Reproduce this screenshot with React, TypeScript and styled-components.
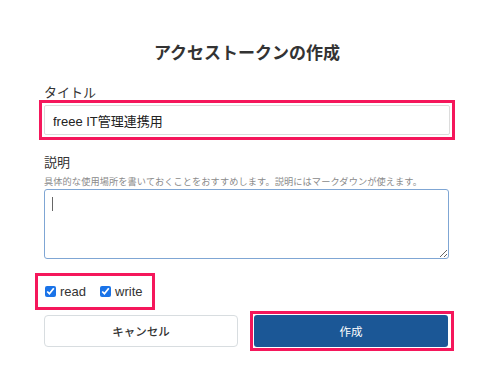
import { useState } from "react";
import styled, { createGlobalStyle } from "styled-components";

const highlight = "#f5175b";
const textColor = "#333333";
const mutedText = "#8a8a8a";
const primaryBlue = "#1b5796";

const GlobalStyle = createGlobalStyle`
  html, body {
    margin: 0;
    padding: 0;
    background: #ffffff;
  }
  body {
    font-family: "Liberation Sans", "Noto Sans CJK JP", sans-serif;
    color: ${textColor};
  }
  * {
    box-sizing: border-box;
  }
`;

const App = () => {
  const [title, setTitle] = useState("freee IT管理連携用");
  const [description, setDescription] = useState("");
  const [read, setRead] = useState(true);
  const [write, setWrite] = useState(true);

  return (
    <>
      <GlobalStyle />
      <Page>
        <Heading>アクセストークンの作成</Heading>

        <Label>タイトル</Label>
        <Highlight>
          <TextInput value={title} onChange={(e) => setTitle(e.target.value)} />
        </Highlight>

        <Label $gap={16}>説明</Label>
        <Help>
          具体的な使用場所を書いておくことをおすすめします。説明にはマークダウンが使えます。
        </Help>
        <AreaWrapper>
          <TextArea
            value={description}
            onChange={(e) => setDescription(e.target.value)}
          />
          {description === "" && <Caret />}
        </AreaWrapper>

        <ScopeBox>
          <Scope>
            <Check
              type="checkbox"
              checked={read}
              onChange={() => setRead(!read)}
            />
            read
          </Scope>
          <Scope>
            <Check
              type="checkbox"
              checked={write}
              onChange={() => setWrite(!write)}
            />
            write
          </Scope>
        </ScopeBox>

        <Actions>
          <CancelButton>キャンセル</CancelButton>
          <SubmitHighlight>
            <SubmitButton>作成</SubmitButton>
          </SubmitHighlight>
        </Actions>
      </Page>
    </>
  );
};
export default App;

const Page = styled.div`
  width: 487px;
  height: 373px;
  padding: 42px 37px 0 44px;
  display: flex;
  flex-direction: column;
  align-items: flex-start;
`;

const Heading = styled.h1`
  align-self: stretch;
  margin: 0;
  text-align: center;
  font-size: 17px;
  line-height: 24px;
  font-weight: 700;
  color: ${textColor};
`;

const Label = styled.div<{ $gap?: number }>`
  margin-top: ${({ $gap }) => $gap ?? 20}px;
  font-size: 13px;
  line-height: 14px;
  color: ${textColor};
`;

const Highlight = styled.div`
  margin-left: -5px;
  padding: 2px;
  border: 3px solid ${highlight};
`;

const TextInput = styled.input`
  display: block;
  width: 406px;
  height: 30px;
  padding: 0 8px;
  border: 1px solid #dcdcdc;
  border-radius: 2px;
  font-family: inherit;
  font-size: 13px;
  color: #222;
  outline: none;
`;

const Help = styled.div`
  margin-top: 6px;
  font-size: 9.2px;
  letter-spacing: 0.1px;
  line-height: 12px;
  color: ${mutedText};
  white-space: nowrap;
`;

const AreaWrapper = styled.div`
  position: relative;
  margin-top: 1px;
`;

const TextArea = styled.textarea`
  display: block;
  width: 405px;
  height: 70px;
  padding: 6px 8px;
  border: 1px solid #7fa6d4;
  border-radius: 3px;
  font-family: inherit;
  font-size: 13px;
  outline: none;
  resize: vertical;
`;

const Caret = styled.span`
  position: absolute;
  left: 8px;
  top: 8px;
  width: 1px;
  height: 14px;
  background: #666;
`;

const ScopeBox = styled.div`
  margin-top: 14px;
  margin-left: -9px;
  width: 120px;
  height: 37px;
  padding: 0 0 0 7px;
  border: 3px solid ${highlight};
  display: flex;
  align-items: center;
  gap: 14px;
`;

const Scope = styled.label`
  display: flex;
  align-items: center;
  gap: 4px;
  font-size: 13px;
  color: ${textColor};
`;

const Check = styled.input`
  width: 11px;
  height: 11px;
  margin: 0;
  accent-color: #1a73e8;
`;

const Actions = styled.div`
  margin-top: 1px;
  display: flex;
  align-items: center;
  gap: 12px;
`;

const CancelButton = styled.button`
  width: 194px;
  height: 32px;
  border: 1px solid #d8dde0;
  border-radius: 4px;
  background: #ffffff;
  font-family: inherit;
  font-size: 11.5px;
  font-weight: 500;
  color: ${textColor};
  cursor: pointer;
`;

const SubmitHighlight = styled.div`
  padding: 1px 3px 1px 1px;
  border: 3px solid ${highlight};
`;

const SubmitButton = styled.button`
  display: block;
  width: 194px;
  height: 32px;
  border: none;
  border-radius: 3px;
  background: ${primaryBlue};
  font-family: inherit;
  font-size: 11.5px;
  color: #ffffff;
  cursor: pointer;
`;
